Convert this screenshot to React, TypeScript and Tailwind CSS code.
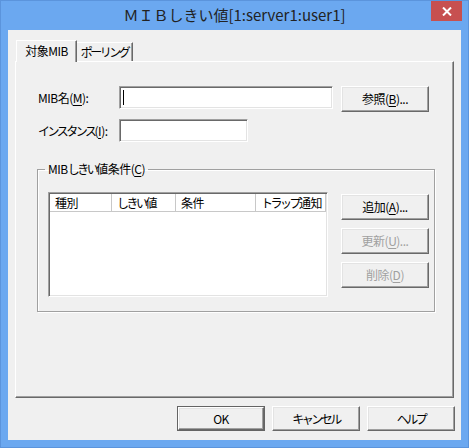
import type { ReactNode } from "react"

const font = "font-['Noto_Sans_CJK_JP','Noto_Sans',sans-serif]"

function Btn({
  children,
  w = "w-[88px]",
  h = "h-[26px]",
  disabled = false,
  isDefault = false,
}: {
  children: ReactNode
  w?: string
  h?: string
  disabled?: boolean
  isDefault?: boolean
}) {
  const face = (
    <div
      className={`flex-1 flex items-center justify-center bg-[#f0f0f0] border border-t-white border-l-white border-b-[#696969] border-r-[#696969] shadow-[inset_-1px_-1px_#a0a0a0,inset_1px_1px_#e3e3e3] text-[12px] whitespace-nowrap ${
        disabled ? "text-[#a0a0a0]" : "text-black"
      }`}
    >
      {children}
    </div>
  )
  if (isDefault) {
    return <div className={`${w} ${h} flex border border-[#646464]`}>{face}</div>
  }
  return <div className={`${w} ${h} flex`}>{face}</div>
}

function Field({ w, children }: { w: string; children?: ReactNode }) {
  return (
    <div
      className={`${w} h-[23px] bg-white border border-t-[#a0a0a0] border-l-[#a0a0a0] border-b-white border-r-white shadow-[inset_1px_1px_#696969,inset_-1px_-1px_#e3e3e3] flex items-center pl-[3px]`}
    >
      {children}
    </div>
  )
}

// mnemonic letter
function U({ children }: { children: ReactNode }) {
  return <span className="underline underline-offset-2">{children}</span>
}

// kana runs are set tighter, like Meiryo UI
function Kana({ children }: { children: ReactNode }) {
  return <span className="tracking-[-2.5px]">{children}</span>
}

export default function App() {
  const cols = [
    { label: <>種別</>, w: "w-[62px]" },
    { label: <><Kana>しきい</Kana>値</>, w: "w-[64px]" },
    { label: <>条件</>, w: "w-[80px]" },
    { label: <><Kana>トラップ</Kana>通知</>, w: "w-[70px]" },
  ]

  return (
    <div className={`${font} w-[469px] h-[448px] bg-[#6ba8f0] border border-[#5b94dc] flex flex-col`}>
      {/* title bar */}
      <div className="relative h-[29px] flex items-center justify-center">
        <span className="text-[15px] text-[#222] whitespace-nowrap">ＭＩＢしきい値[1:server1:user1]</span>
        <div className="absolute top-0 right-[6px] w-[31px] h-[20px] bg-[#c75050] flex items-center justify-center">
          <svg width="10" height="9" viewBox="0 0 10 9">
            <path d="M1 0.5 L9 8.5 M9 0.5 L1 8.5" stroke="white" strokeWidth="2" />
          </svg>
        </div>
      </div>

      {/* client area */}
      <div className="mx-[7px] h-[410px] bg-[#f0f0f0] flex flex-col text-black tracking-[-0.5px] whitespace-nowrap">
        {/* tabs */}
        <div className="flex items-end pl-[8px] pt-[10px] relative z-10">
          <div className="w-[61px] h-[22px] -mb-px bg-[#f0f0f0] border-t border-l border-t-white border-l-white border-r border-r-[#696969] shadow-[inset_-1px_0_#a0a0a0] flex items-start justify-center pt-[1px] text-[12px]">
            対象MIB
          </div>
          <div className="w-[56px] h-[19px] bg-[#f0f0f0] border-t border-t-white border-r border-r-[#696969] shadow-[inset_-1px_0_#a0a0a0] flex items-start justify-center text-[12px] leading-[17px]">
            <Kana>ポーリング</Kana>
          </div>
        </div>

        {/* tab panel */}
        <div className="mx-[7px] w-[439px] h-[337px] border border-t-white border-l-white border-b-[#696969] border-r-[#696969] shadow-[inset_-1px_-1px_#a0a0a0] pt-[24px] pl-[22px] text-[12px]">
          <div className="flex items-start">
            <div className="w-[81px] h-[23px] flex items-center">
              MIB名(<U>M</U>):
            </div>
            <Field w="w-[214px]">
              <span className="w-px h-[15px] bg-black" />
            </Field>
            <div className="ml-[8px]">
              <Btn>
                参照(<U>B</U>)...
              </Btn>
            </div>
          </div>

          <div className="flex items-start mt-[7px]">
            <div className="w-[81px] h-[23px] flex items-center">
              <Kana>インスタンス</Kana>(<U>I</U>):
            </div>
            <Field w="w-[129px]" />
          </div>

          <fieldset className="-ml-px mt-[19px] w-[398px] h-[151px] border border-[#a0a0a0] shadow-[inset_1px_1px_white,1px_1px_white] p-0">
            <legend className="ml-[7px] px-[3px] leading-[16px]">
              MIB<Kana>しきい</Kana>値条件(<U>C</U>)
            </legend>
            <div className="flex items-start pl-[10px] pt-[15px]">
              <div className="w-[280px] h-[105px] bg-white border border-t-[#a0a0a0] border-l-[#a0a0a0] border-b-white border-r-white shadow-[inset_1px_1px_#696969,inset_-1px_-1px_#e3e3e3] pl-[1px] pt-[1px]">
                <div className="flex h-[18px]">
                  {cols.map((c, i) => (
                    <div
                      key={i}
                      className={`${c.w} h-[18px] border-r border-b border-r-[#c8c8c8] border-b-[#c8c8c8] shadow-[inset_-1px_0_white] pl-[5px] leading-[17px] overflow-hidden`}
                    >
                      {c.label}
                    </div>
                  ))}
                </div>
              </div>
              <div className="ml-[13px] mt-[2px] flex flex-col gap-[8px]">
                <Btn>
                  追加(<U>A</U>)...
                </Btn>
                <Btn disabled>
                  更新(<U>U</U>)...
                </Btn>
                <Btn disabled>
                  削除(<U>D</U>)
                </Btn>
              </div>
            </div>
          </fieldset>
        </div>

        {/* dialog buttons */}
        <div className="flex justify-end gap-[7px] pr-[6px] mt-[8px]">
          <Btn h="h-[25px]" isDefault>
            OK
          </Btn>
          <Btn h="h-[25px]">
            <Kana>キャンセル</Kana>
          </Btn>
          <Btn h="h-[25px]">
            <Kana>ヘルプ</Kana>
          </Btn>
        </div>
      </div>
    </div>
  )
}
